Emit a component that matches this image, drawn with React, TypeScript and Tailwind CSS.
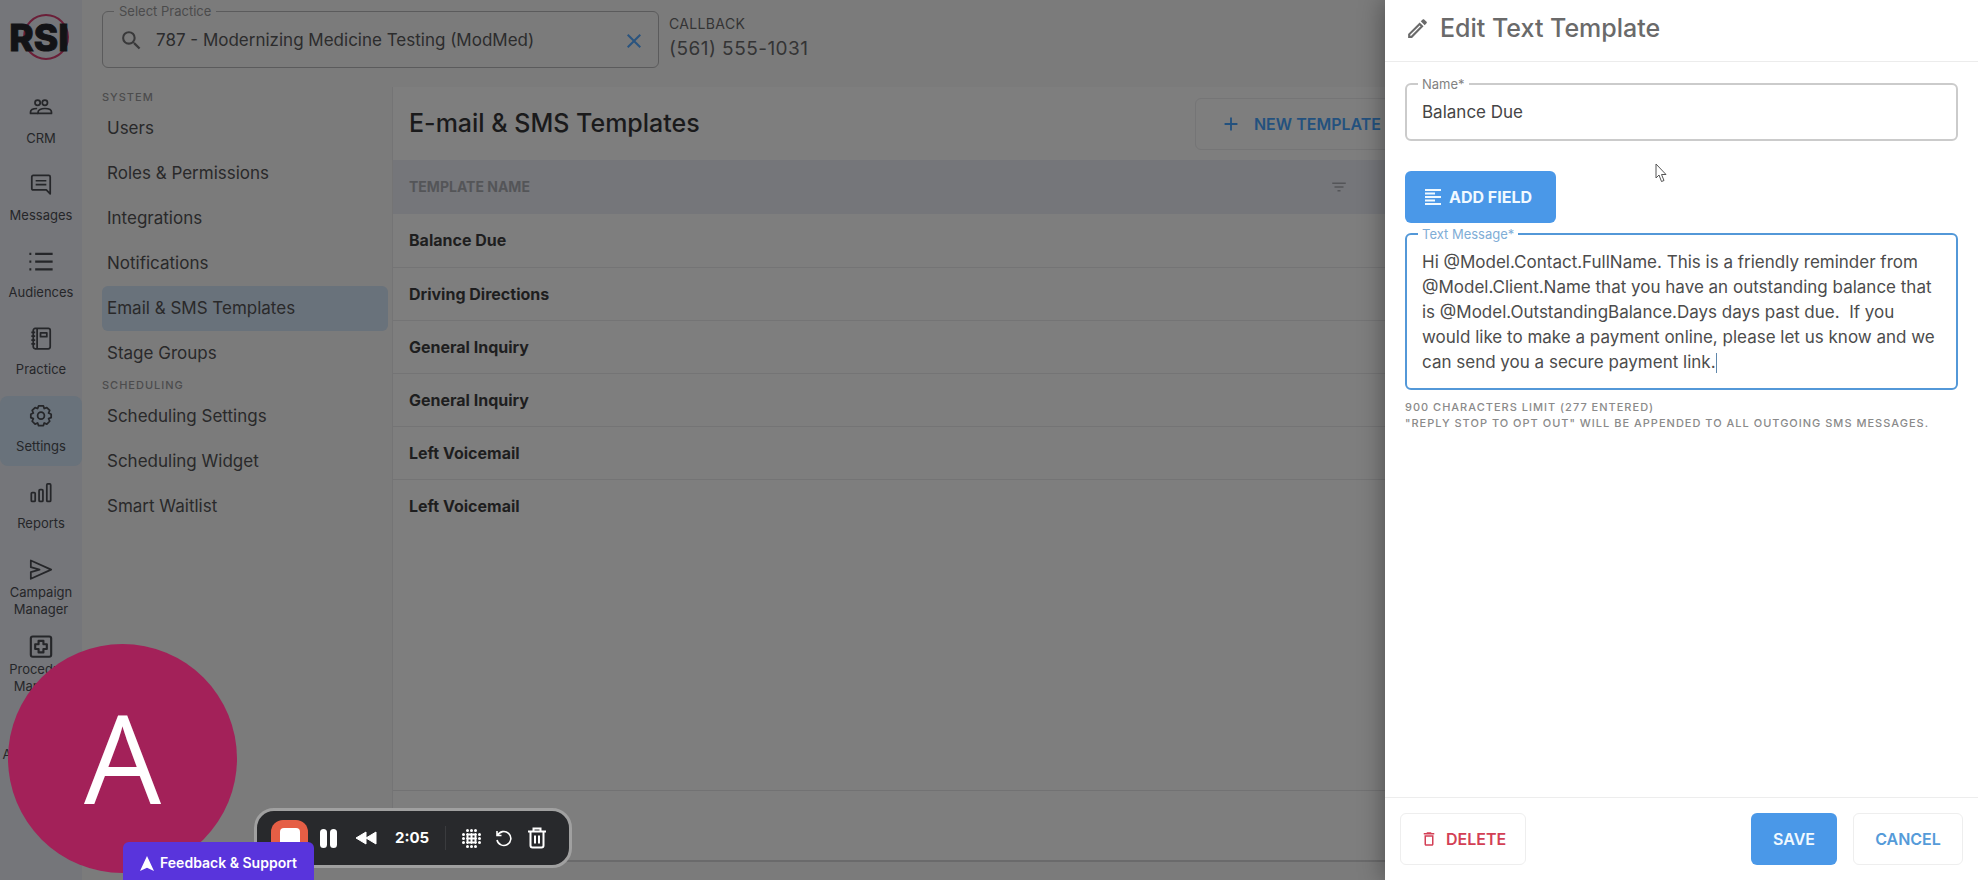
import type { ReactNode } from 'react';
import {
  MdClose,
  MdOutlineEdit,
  MdSearch,
  MdDeleteOutline,
  MdAdd,
  MdFilterList,
} from 'react-icons/md';

const RailIcon = ({ children }: { children: ReactNode }) => (
  <svg width="24" height="24" viewBox="0 0 24 24" fill="none" stroke="currentColor" strokeWidth="1.8" strokeLinejoin="round">
    {children}
  </svg>
);

const railItems: { label: string; icon: ReactNode; active?: boolean }[] = [
  {
    label: 'CRM',
    icon: (
      <>
        <circle cx="8.5" cy="7" r="2.7" />
        <circle cx="16" cy="7" r="2.7" />
        <path d="M9 18v-1.500c0-2.200 3-3.600 7-3.600s6.800 1.400 6.800 3.600v1.500z" />
        <path d="M9 18H1.200v-1.500c0-2.300 2.800-3.600 6.800-3.600" />
      </>
    ),
  },
  { label: 'Messages', icon: <path d="M4 2.500h16c1 0 1.500.5 1.500 1.500v17.500l-4-4H4c-1 0-1.500-.5-1.500-1.500V4c0-1 .5-1.500 1.500-1.500zM6.500 8h11M6.500 12h11" /> },
  { label: 'Audiences', icon: <path strokeWidth="2.200" d="M6 4h18M6 12h18M6 20h18M0 4h2M0 12h2M0 20h2" /> },
  {
    label: 'Practice',
    icon: (
      <>
        <rect x="4" y="1.500" width="17.500" height="21" rx="2" />
        <path d="M8 2v20M2 5.500h4M2 9.500h4M2 13.500h4M2 17.500h4" />
        <rect x="11.500" y="6" width="6.500" height="4" />
      </>
    ),
  },
  {
    label: 'Settings',
    active: true,
    icon: (
      <>
        <circle cx="12" cy="12" r="3.500" />
        <path d="M9.500 2h5l.8 2.700 2.700-1 3 3-1.200 2.600 2.700 1.200v3.500l-2.700 1 1.200 2.800-3 3-2.700-1.200-.8 2.700h-5l-1-2.700-2.600 1.200-3-3 1.200-2.700-2.600-1v-3.600l2.600-1.200-1.200-2.600 3-3 2.600 1z" />
      </>
    ),
  },
  {
    label: 'Reports',
    icon: (
      <>
        <rect x="2" y="12" width="4" height="9" rx="1" />
        <rect x="10" y="9" width="4" height="12" rx="1" />
        <rect x="18" y="3" width="4" height="18" rx="1" />
      </>
    ),
  },
  { label: 'Campaign Manager', icon: <path d="M1.500 2.500l21 9.500-21 9.500v-7l9-2.500-9-2.500z" /> },
  {
    label: 'Procedure Manager',
    icon: (
      <>
        <rect x="1.500" y="1.500" width="21" height="21" rx="2" strokeWidth="2.200" />
        <path strokeWidth="2.200" d="M9.500 6h5v3.500H18v5h-3.500V18h-5v-3.500H6v-5h3.500z" />
      </>
    ),
  },
  { label: 'Automations', icon: <circle cx="12" cy="12" r="9" /> },
];

const navGroups = [
  {
    title: 'System',
    links: ['Users', 'Roles & Permissions', 'Integrations', 'Notifications', 'Email & SMS Templates', 'Stage Groups'],
  },
  { title: 'Scheduling', links: ['Scheduling Settings', 'Scheduling Widget', 'Smart Waitlist'] },
];

const templates = ['Balance Due', 'Driving Directions', 'General Inquiry', 'General Inquiry', 'Left Voicemail', 'Left Voicemail'];

const message =
  'Hi @Model.Contact.FullName. This is a friendly reminder from @Model.Client.Name that you have an outstanding balance that is @Model.OutstandingBalance.Days days past due.  If you would like to make a payment online, please let us know and we can send you a secure payment link.';

function Logo() {
  return (
    <svg width="74" height="60" viewBox="0 0 74 60" role="img" aria-label="RSI">
      <circle cx="42" cy="30" r="22" fill="none" stroke="#6b1f38" strokeWidth="2" />
      <text x="35" y="44" textAnchor="middle" fontFamily="Inter" fontWeight="800" fontSize="37" fill="#131316" stroke="#131316">RSI</text>
    </svg>
  );
}

function Rail() {
  return (
    <aside className="w-[82px] shrink-0 bg-[#75767a] pt-[7px]">
      <div className="flex h-[81px] justify-center"><Logo /></div>
      <nav className="flex flex-col gap-[7px]">
        {railItems.map(({ label, icon, active }) => (
          <a
            key={label}
            href="#"
            className={`flex h-[70px] flex-col items-center rounded-lg pt-2 text-[13px] leading-[17px] text-[#252629] ${active ? 'bg-[#69727b]' : ''}`}
          >
            <RailIcon>{icon}</RailIcon>
            <span className="flex h-10 items-center text-center">{label}</span>
          </a>
        ))}
      </nav>
    </aside>
  );
}

function TopBar() {
  return (
    <header className="flex h-[87px] items-start gap-[10px] pt-1 pl-5">
      <fieldset className="flex h-[64px] w-[557px] items-center rounded-md border border-[#5b5b5c] pr-3 pb-1 pl-4">
        <legend className="-ml-[5px] px-[5px] text-[13px] leading-[14px] text-[#4b4b4c]"><label htmlFor="practice">Select Practice</label></legend>
        <MdSearch size={25} className="shrink-0 text-[#39393a]" />
        <input
          id="practice"
          defaultValue="787 - Modernizing Medicine Testing (ModMed)"
          className="ml-3 min-w-0 flex-1 bg-transparent text-[17px] text-[#2c2c2d] outline-none"
        />
        <button aria-label="Clear practice"><MdClose size={24} className="text-[#2a547f]" /></button>
      </fieldset>
      <div className="pt-3 text-[#343435]">
        <p className="text-sm leading-4 tracking-wide">CALLBACK</p>
        <p className="text-[19px] leading-[34px] tracking-wide">(561) 555-1031</p>
      </div>
    </header>
  );
}

function SettingsNav() {
  return (
    <nav className="w-[311px] shrink-0 border-r border-[#747475] pt-px pr-1 pl-5">
      {navGroups.map((group) => (
        <div key={group.title}>
          <h2 className="h-[18px] text-[11px] leading-[18px] font-medium tracking-[1px] text-[#4c4c4d] uppercase">{group.title}</h2>
          {group.links.map((link) => (
            <a
              key={link}
              href="#"
              className={`flex h-[45px] items-center rounded-md px-[5px] text-[17px] text-[#29292a] ${link === 'Email & SMS Templates' ? 'bg-[#69727b]' : ''}`}
            >
              {link}
            </a>
          ))}
        </div>
      ))}
    </nav>
  );
}

function TemplateList() {
  return (
    <main className="flex min-w-0 flex-1 flex-col border-b-2 border-[#6a6a6b] bg-[#7e7e7e]">
      <div className="flex h-[73px] items-center justify-between pl-4">
        <h1 className="text-[25px] font-medium text-[#1a1a1b]">E-mail &amp; SMS Templates</h1>
        <button className="-mr-[21px] flex h-[52px] items-center gap-3 rounded-md border border-[#757576] px-6 font-semibold text-[#23517e]">
          <MdAdd size={22} /> NEW TEMPLATE
        </button>
      </div>
      <table className="w-full">
        <thead>
          <tr className="h-[54px] bg-[#75767a] text-left text-[#545558]">
            <th className="pl-4 text-sm font-bold">TEMPLATE NAME</th>
            <th className="w-[55px]"><MdFilterList size={18} aria-label="Filter" /></th>
          </tr>
        </thead>
        <tbody>
          {templates.map((name, i) => (
            <tr key={i} className="h-[53px] border-b border-[#747475] last:border-b-0">
              <td colSpan={2} className="pl-4 font-bold text-[#1e1e1f]">{name}</td>
            </tr>
          ))}
        </tbody>
      </table>
      <div className="mt-auto h-[70px] border-t border-[#727273]" />
    </main>
  );
}

function EditPanel() {
  return (
    <section className="z-10 flex w-[593px] shrink-0 flex-col bg-white shadow-[0_0_24px_rgba(0,0,0,0.4)]">
      <header className="flex h-[62px] items-center gap-[10px] border-b border-[#ececec] px-5 pb-1 text-[#6a6a6a]">
        <MdOutlineEdit size={25} />
        <h2 className="text-[25px] font-medium">Edit Text Template</h2>
      </header>
      <form className="flex flex-1 flex-col px-5 pt-[15px]">
        <fieldset className="h-[64px] rounded-md border-2 border-[#cbcbcb] px-[15px]">
          <legend className="-ml-1 px-1 text-[13px] leading-[14px] text-[#828282]"><label htmlFor="name">Name*</label></legend>
          <input id="name" defaultValue="Balance Due" className="mt-[9px] w-full text-[17px] leading-6 text-[#454545] outline-none" />
        </fieldset>
        <button type="button" className="mt-[30px] flex h-[52px] w-[151px] items-center justify-center gap-2 rounded-md bg-[#4a98e8] pr-1 font-bold text-[#f0f9ff]">
          <svg width="16" height="16" viewBox="0 0 16 16" stroke="currentColor" strokeWidth="2">
            <path d="M0 1h16M0 4.500h10M0 8h16M0 11.500h10M0 15h16" />
          </svg>
          ADD FIELD
        </button>
        <fieldset className="mt-1 h-[163px] rounded-md border-2 border-[#5398d8] px-[15px]">
          <legend className="-ml-1 px-1 text-[13px] leading-[14px] text-[#7fadd6]"><label htmlFor="message">Text Message*</label></legend>
          <div className="relative mt-[9px]">
            <textarea
              id="message"
              defaultValue={message}
              className="block h-[125px] w-full resize-none text-[17px] leading-[25px] text-[#4c4c4c] outline-none"
            />
            <span className="absolute bottom-[2px] left-[294px] h-5 w-px bg-[#5f87ab]" />
          </div>
        </fieldset>
        <p className="mt-[9px] text-[11px] leading-4 font-medium tracking-[1px] text-[#8a8a8a]">
          900 CHARACTERS LIMIT (277 ENTERED)<br />
          "REPLY STOP TO OPT OUT" WILL BE APPENDED TO ALL OUTGOING SMS MESSAGES.
        </p>
      </form>
      <footer className="flex h-[83px] items-center gap-4 border-t border-[#ededed] px-[15px]">
        <button className="mr-auto flex h-[52px] items-center gap-2 rounded-md border border-[#eeeeee] px-[19px] font-semibold text-[#d33f55]">
          <MdDeleteOutline size={18} /> DELETE
        </button>
        <button className="h-[52px] w-[86px] rounded-md bg-[#4a98e8] font-semibold text-[#f0f9ff]">SAVE</button>
        <button className="h-[52px] w-[110px] rounded-md border border-[#eeeeee] font-semibold text-[#559bd9]">CANCEL</button>
      </footer>
    </section>
  );
}

function Recorder() {
  return (
    <div className="absolute bottom-3 left-[254px] z-20 flex h-[60px] w-[318px] items-center rounded-[20px] border-[3px] border-[#a0a0a0] bg-[#28292c] pl-[14px] text-white">
      <button aria-label="Stop" className="flex size-[37px] items-center justify-center rounded-xl bg-[#e55e45]">
        <span className="size-5 rounded-sm bg-white" />
      </button>
      <button aria-label="Pause" className="ml-3 flex gap-[3px]">
        <span className="h-[19px] w-[7px] rounded-sm bg-white" />
        <span className="h-[19px] w-[7px] rounded-sm bg-white" />
      </button>
      <button aria-label="Rewind" className="ml-[18px]">
        <svg width="22" height="14" viewBox="0 0 22 14" fill="currentColor" stroke="currentColor" strokeLinejoin="round">
          <path d="M11 1v12L1 7zM21 1v12L11 7z" />
        </svg>
      </button>
      <span className="ml-[18px] text-[15px] font-bold">2:05</span>
      <span className="mx-4 h-6 w-px bg-[#3a3b3e]" />
      <button aria-label="Effects">
        <svg width="19" height="19" viewBox="0 0 19 19" fill="currentColor" stroke="currentColor" strokeLinecap="round">
          <path strokeWidth="3" d="M5.500 1.500v0M9.500 1.500v0M13.500 1.500v0M1.500 5.500h0M1.500 9.500h0M1.500 13.500h0M17.500 5.500h0M17.500 9.500h0M17.500 13.500h0M5.500 17.500h0M9.500 17.500h0M13.500 17.500h0" />
          <path strokeWidth="2" d="M5.500 5v9M9.500 5v9M13.500 5v9M5 5.500h9M5 9.500h9M5 13.500h9" />
        </svg>
      </button>
      <button aria-label="Restart" className="ml-[14px]">
        <svg width="18" height="18" viewBox="0 0 18 18" fill="none" stroke="currentColor" strokeWidth="1.600">
          <path d="M2 2v4.500h4.500M2.500 6.500a7 7 0 1 1-.5 4.500" />
        </svg>
      </button>
      <button aria-label="Discard" className="ml-[15px]">
        <svg width="18" height="22" viewBox="0 0 18 22" fill="none" stroke="currentColor" strokeWidth="2">
          <path d="M0 4.500h18M5.500 4V1.500h7V4M2.500 5v13.500c0 1.500.5 2 2 2h9c1.500 0 2-.5 2-2V5M7 8.500v8M11 8.500v8" />
        </svg>
      </button>
    </div>
  );
}

export default function App() {
  return (
    <div className="relative flex h-screen overflow-hidden bg-[#7b7b7b] font-['Inter',sans-serif]">
      <Rail />
      <div className="flex min-w-0 flex-1 flex-col pb-[18px]">
        <TopBar />
        <div className="flex flex-1">
          <SettingsNav />
          <TemplateList />
        </div>
      </div>
      <EditPanel />

      <div className="absolute bottom-[7px] left-2 z-20 flex size-[229px] items-center justify-center rounded-full bg-[#a32159] pb-1 font-['Open_Sans',sans-serif] text-[122px] leading-none font-medium text-white">
        A
      </div>
      <Recorder />
      <button className="absolute bottom-0 left-[123px] z-30 flex h-[38px] w-[191px] items-center justify-center gap-[6px] rounded-t-md bg-[#5934dc] pt-1 text-sm font-semibold text-white">
        <svg width="14" height="15" viewBox="0 0 15 16" fill="currentColor"><path d="M7.500 0L15 16l-7.500-3.500L0 16z" /></svg>
        Feedback &amp; Support
      </button>

      <svg className="absolute top-[163px] right-[311px] z-20" width="12" height="20" viewBox="0 0 12 20" fill="#fff" stroke="#555" strokeLinejoin="round">
        <path d="M1 1v14l3-3 2.500 6.500 2.500-1-2.500-6H11z" />
      </svg>
    </div>
  );
}
